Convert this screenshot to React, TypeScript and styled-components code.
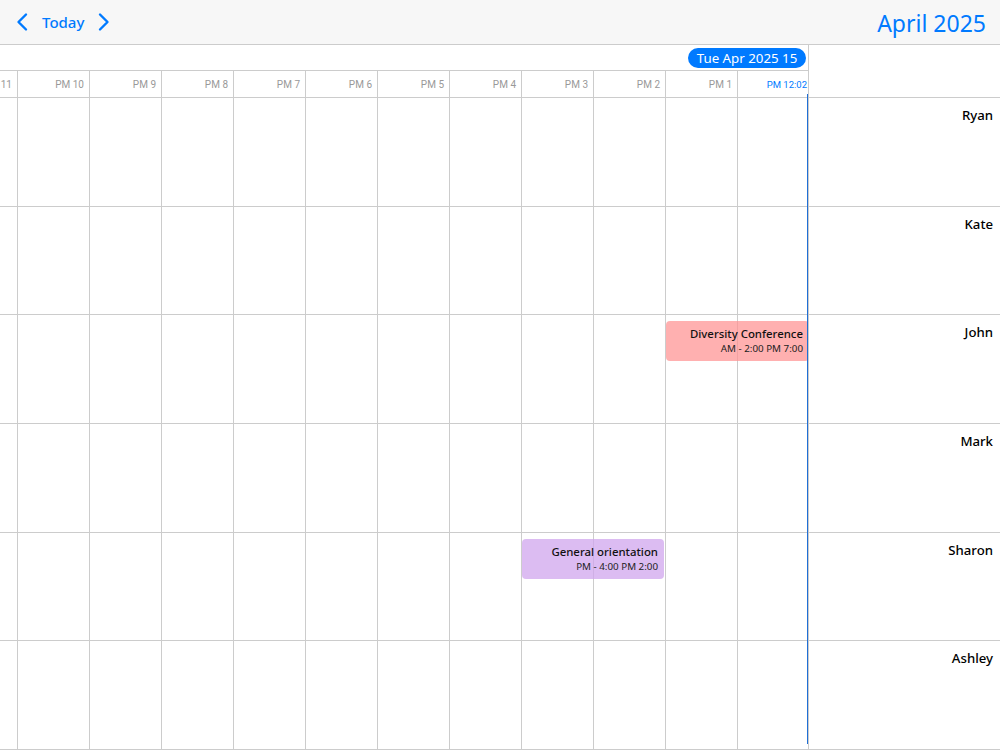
import { type FC } from 'react';
import styled, { createGlobalStyle } from 'styled-components';

const GlobalStyle = createGlobalStyle`
  html, body {
    margin: 0;
    padding: 0;
    background: #fff;
  }
  * {
    box-sizing: border-box;
  }
`;

const LINE = '#cccccc';
const BLUE = '#007aff';
const UI_FONT = '"Noto Sans", "Open Sans", sans-serif';

const Page = styled.div`
  width: 1000px;
  height: 750px;
  display: flex;
  flex-direction: column;
  overflow: hidden;
  font-family: ${UI_FONT};
`;

const Toolbar = styled.header`
  height: 45px;
  flex: none;
  display: flex;
  justify-content: space-between;
  align-items: center;
  padding: 0 14px 0 15px;
  background: #f7f7f7;
  border-bottom: 1px solid ${LINE};
`;

const Nav = styled.div`
  display: flex;
  align-items: center;
  gap: 13px;
`;

const NavButton = styled.button`
  display: flex;
  padding: 0;
  border: 0;
  background: none;
  color: ${BLUE};
  cursor: pointer;
`;

const TodayButton = styled(NavButton)`
  font-family: ${UI_FONT};
  font-size: 15px;
  font-weight: 500;
`;

const MonthTitle = styled.h1`
  margin: 0;
  padding-top: 2px;
  font-size: 23px;
  font-weight: 400;
  color: ${BLUE};
`;

const Body = styled.div`
  flex: 1;
  display: flex;
  min-height: 0;
`;

const Timeline = styled.div`
  position: relative;
  width: 809px;
  flex: none;
  display: flex;
  flex-direction: column;
  border-right: 1px solid ${LINE};
  overflow: hidden;
`;

const DateBar = styled.div`
  height: 26px;
  flex: none;
  display: flex;
  justify-content: flex-end;
  align-items: center;
  padding-right: 2px;
  border-bottom: 1px solid ${LINE};
`;

const DatePill = styled.span`
  height: 20px;
  width: 118px;
  display: flex;
  justify-content: center;
  align-items: center;
  border-radius: 10px;
  background: ${BLUE};
  color: #fff;
  font-size: 13.3px;
`;

const HourRow = styled.div`
  height: 27px;
  flex: none;
  display: flex;
  flex-direction: row-reverse;
  border-bottom: 1px solid ${LINE};
`;

const HourCell = styled.div<{ $now?: boolean }>`
  width: ${(props) => (props.$now ? '71px' : '72px')};
  flex: none;
  display: flex;
  justify-content: flex-end;
  align-items: center;
  padding-right: ${(props) => (props.$now ? '1px' : '5px')};
  border-left: 1px solid ${LINE};
  font-family: Roboto, sans-serif;
  font-size: ${(props) => (props.$now ? '9.5px' : '10px')};
  color: ${(props) => (props.$now ? BLUE : '#999999')};
`;

const Lanes = styled.div`
  flex: 1;
  display: grid;
  grid-template-rows: repeat(6, 1fr);
  min-height: 0;
`;

const Lane = styled.div`
  position: relative;
  display: flex;
  flex-direction: row-reverse;
  border-bottom: 1px solid ${LINE};
  overflow: hidden;
`;

const LaneCell = styled.div<{ $now?: boolean }>`
  width: ${(props) => (props.$now ? '71px' : '72px')};
  flex: none;
  border-left: 1px solid ${LINE};
`;

const EventBlock = styled.div<{ $color: string; $right: number; $width: number }>`
  position: absolute;
  top: 6px;
  right: ${(props) => props.$right}px;
  width: ${(props) => props.$width}px;
  height: 40px;
  padding: 4px 6px 0 0;
  border-radius: 4px;
  background: ${(props) => props.$color};
  text-align: right;
  color: #111;
`;

const EventTitle = styled.div`
  font-size: 11.4px;
  font-weight: 500;
  line-height: 17px;
`;

const EventTime = styled.div`
  font-size: 9.8px;
  line-height: 13px;
  color: #222;
`;

const NowLine = styled.div`
  position: absolute;
  top: 49px;
  right: 0;
  bottom: 6px;
  width: 1px;
  background: #1f6fd6;
`;

const Names = styled.aside`
  flex: 1;
  display: flex;
  flex-direction: column;
`;

const NamesHead = styled.div`
  height: 53px;
  flex: none;
  border-bottom: 1px solid ${LINE};
`;

const NameList = styled.div`
  flex: 1;
  display: grid;
  grid-template-rows: repeat(6, 1fr);
  min-height: 0;
`;

const NameRow = styled.div`
  padding: 7px 7px 0 0;
  border-bottom: 1px solid ${LINE};
  text-align: right;
  font-size: 13.2px;
  font-weight: 500;
  line-height: 20px;
  color: #000;
`;

const Chevron: FC<{ d: string }> = ({ d }) => (
  <svg width="14" height="20" viewBox="0 0 14 20" fill="none">
    <path d={d} stroke="currentColor" strokeWidth="2.4" strokeLinecap="round" strokeLinejoin="round" />
  </svg>
);

const HOURS = ['PM 12:02', 'PM 1', 'PM 2', 'PM 3', 'PM 4', 'PM 5', 'PM 6', 'PM 7', 'PM 8', 'PM 9', 'PM 10', 'PM 11'];
const PEOPLE = ['Ryan', 'Kate', 'John', 'Mark', 'Sharon', 'Ashley'];

const EVENTS: Record<string, { title: string; time: string; color: string; right: number; width: number }> = {
  John: {
    title: 'Diversity Conference',
    time: 'AM - 2:00 PM 7:00',
    color: 'rgba(255, 145, 145, 0.72)',
    right: -1,
    width: 143,
  },
  Sharon: {
    title: 'General orientation',
    time: 'PM - 4:00 PM 2:00',
    color: 'rgba(208, 165, 238, 0.74)',
    right: 144,
    width: 142,
  },
};

export default function App() {
  return (
    <Page>
      <GlobalStyle />
      <Toolbar>
        <Nav>
          <NavButton aria-label="Previous">
            <Chevron d="M11 2.5 3.5 10l7.5 7.5" />
          </NavButton>
          <TodayButton>Today</TodayButton>
          <NavButton aria-label="Next">
            <Chevron d="M3 2.5 10.5 10 3 17.5" />
          </NavButton>
        </Nav>
        <MonthTitle>April 2025</MonthTitle>
      </Toolbar>
      <Body>
        <Timeline>
          <DateBar>
            <DatePill>Tue Apr 2025 15</DatePill>
          </DateBar>
          <HourRow>
            {HOURS.map((hour, i) => (
              <HourCell key={hour} $now={i === 0}>
                {hour}
              </HourCell>
            ))}
          </HourRow>
          <Lanes>
            {PEOPLE.map((person) => {
              const event = EVENTS[person];
              return (
                <Lane key={person}>
                  {HOURS.map((hour, i) => (
                    <LaneCell key={hour} $now={i === 0} />
                  ))}
                  {event && (
                    <EventBlock $color={event.color} $right={event.right} $width={event.width}>
                      <EventTitle>{event.title}</EventTitle>
                      <EventTime>{event.time}</EventTime>
                    </EventBlock>
                  )}
                </Lane>
              );
            })}
          </Lanes>
          <NowLine />
        </Timeline>
        <Names>
          <NamesHead />
          <NameList>
            {PEOPLE.map((person) => (
              <NameRow key={person}>{person}</NameRow>
            ))}
          </NameList>
        </Names>
      </Body>
    </Page>
  );
}
